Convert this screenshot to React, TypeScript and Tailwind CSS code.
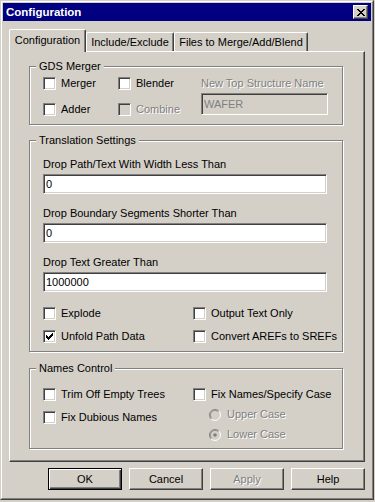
import type { ReactNode } from 'react'

const disabledText = 'text-[#808080] [text-shadow:1px_1px_0_#ffffff]'

function CheckBox({ label, checked = false, disabled = false }: { label: string; checked?: boolean; disabled?: boolean }) {
  return (
    <div className="flex h-[13px] items-center">
      <div
        className={`flex h-[13px] w-[13px] shrink-0 items-center justify-center border border-t-[#808080] border-l-[#808080] border-r-white border-b-white shadow-[inset_1px_1px_0_#404040,inset_-1px_-1px_0_#d4d0c8] ${
          disabled ? 'bg-[#d4d0c8]' : 'bg-white'
        }`}
      >
        {checked && (
          <svg width="7" height="7" viewBox="0 0 7 7" shapeRendering="crispEdges">
            <path
              fill="#000"
              d="M0 2h1v3h-1z M1 3h1v3h-1z M2 4h1v3h-1z M3 3h1v3h-1z M4 2h1v3h-1z M5 1h1v3h-1z M6 0h1v3h-1z"
            />
          </svg>
        )}
      </div>
      <span className={`ml-[5px] whitespace-nowrap leading-[13px] ${disabled ? disabledText : 'text-black'}`}>{label}</span>
    </div>
  )
}

function Radio({ label, checked = false }: { label: string; checked?: boolean }) {
  // only disabled radios in this dialog
  return (
    <div className="flex h-[13px] items-center">
      <svg width="12" height="12" viewBox="0 0 12 12" className="shrink-0">
        <circle cx="6" cy="6" r="5.5" fill="#d4d0c8" />
        <path d="M2.111 9.889A5.5 5.5 0 0 1 9.889 2.111" fill="none" stroke="#808080" />
        <path d="M9.889 2.111A5.5 5.5 0 0 1 2.111 9.889" fill="none" stroke="#ffffff" />
        <path d="M2.818 9.182A4.5 4.5 0 0 1 9.182 2.818" fill="none" stroke="#404040" strokeOpacity="0.35" />
        {checked && <circle cx="6" cy="6" r="1.8" fill="#808080" />}
      </svg>
      <span className={`ml-[6px] whitespace-nowrap leading-[13px] ${disabledText}`}>{label}</span>
    </div>
  )
}

function Field({ value, disabled = false, className = '' }: { value: string; disabled?: boolean; className?: string }) {
  return (
    <input
      readOnly
      defaultValue={value}
      className={`border border-t-[#808080] border-l-[#808080] border-r-white border-b-white pl-[2px] leading-[13px] shadow-[inset_1px_1px_0_#404040,inset_-1px_-1px_0_#d4d0c8] outline-none ${
        disabled ? 'bg-[#d4d0c8] text-[#808080]' : 'bg-white text-black'
      } ${className}`}
    />
  )
}

function GroupBox({ title, className = '', children }: { title: string; className?: string; children: ReactNode }) {
  return (
    <fieldset className={`w-[314px] border border-[#808080] shadow-[inset_1px_1px_0_#ffffff,1px_1px_0_#ffffff] ${className}`}>
      <legend className="ml-[6px] bg-[#d4d0c8] px-[3px] leading-[13px]">{title}</legend>
      {children}
    </fieldset>
  )
}

function Button({ label, isDefault = false, disabled = false }: { label: string; isDefault?: boolean; disabled?: boolean }) {
  const bevel = isDefault
    ? 'border border-black shadow-[inset_1px_1px_0_#ffffff,inset_-1px_-1px_0_#404040,inset_-2px_-2px_0_#808080]'
    : 'border border-t-white border-l-white border-r-[#404040] border-b-[#404040] shadow-[inset_-1px_-1px_0_#808080]'
  return (
    <button className={`flex h-[22px] w-[74px] items-center justify-center bg-[#d4d0c8] ${bevel} ${disabled ? disabledText : 'text-black'}`}>
      {label}
    </button>
  )
}

export default function App() {
  return (
    <div className="h-[502px] w-[375px] bg-[#d4d0c8] font-['Liberation_Sans',Arial,sans-serif] text-[11px] leading-[13px] text-black">
      {/* window frame */}
      <div className="h-[500px] w-[374px] border border-t-[#d4d0c8] border-l-[#d4d0c8] border-r-[#404040] border-b-[#404040]">
        <div className="h-full border border-t-white border-l-white border-r-[#808080] border-b-[#808080] p-[1px]">
          {/* title bar */}
          <div className="flex h-[18px] items-center justify-between bg-[#000080] pl-[3px]">
            <span className="pt-[1px] text-[11.5px] font-bold text-white">Configuration</span>
            <div className="mr-[3px] flex h-[14px] w-[15px] items-center justify-center border border-t-white border-l-white border-r-[#404040] border-b-[#404040] bg-[#d4d0c8] shadow-[inset_-1px_-1px_0_#808080]">
              <svg width="8" height="7" viewBox="0 0 8 7" shapeRendering="crispEdges">
                <path
                  fill="#000"
                  d="M0 0h2v1h-2z M6 0h2v1h-2z M1 1h2v1h-2z M5 1h2v1h-2z M2 2h4v1h-4z M3 3h2v1h-2z M2 4h4v1h-4z M1 5h2v1h-2z M5 5h2v1h-2z M0 6h2v1h-2z M6 6h2v1h-2z"
                />
              </svg>
            </div>
          </div>

          <div className="px-[6px] pt-[8px]">
            {/* tabs */}
            <div className="flex h-[22px] items-end">
              <div className="relative z-10 -mb-px flex h-[23px] w-[77px] items-center justify-center rounded-t-[2px] border-t border-l border-r border-t-white border-l-white border-r-[#404040] bg-[#d4d0c8] pb-[2px] shadow-[inset_-1px_0_0_#808080]">
                Configuration
              </div>
              <div className="flex h-[19px] w-[88px] items-center justify-center rounded-t-[2px] border-t border-l border-r border-t-white border-l-white border-r-[#404040] shadow-[inset_-1px_0_0_#808080]">
                Include/Exclude
              </div>
              <div className="flex h-[19px] w-[134px] items-center justify-center rounded-t-[2px] border-t border-l border-r border-t-white border-l-white border-r-[#404040] shadow-[inset_-1px_0_0_#808080]">
                Files to Merge/Add/Blend
              </div>
            </div>

            {/* tab page */}
            <div className="h-[411px] border border-t-white border-l-white border-r-[#404040] border-b-[#404040] pl-[19px] pt-[8px] shadow-[inset_-1px_-1px_0_#808080]">
              <GroupBox title="GDS Merger">
                <div className="flex pb-[8px] pl-[13px] pt-[4px]">
                  <div className="flex w-[75px] flex-col gap-[13px]">
                    <CheckBox label="Merger" />
                    <CheckBox label="Adder" />
                  </div>
                  <div className="flex w-[83px] flex-col gap-[13px]">
                    <CheckBox label="Blender" />
                    <CheckBox label="Combine" disabled />
                  </div>
                  <div className="flex flex-col">
                    <span className={`whitespace-nowrap leading-[13px] ${disabledText}`}>New Top Structure Name</span>
                    <Field value="WAFER" disabled className="mt-[3px] h-[22px] w-[127px]" />
                  </div>
                </div>
              </GroupBox>

              <GroupBox title="Translation Settings" className="mt-[9px]">
                <div className="flex flex-col pb-[8px] pl-[13px] pt-[11px]">
                  <span>Drop Path/Text With Width Less Than</span>
                  <Field value="0" className="mt-[3px] h-[20px] w-[284px]" />
                  <span className="mt-[13px]">Drop Boundary Segments Shorter Than</span>
                  <Field value="0" className="mt-[3px] h-[20px] w-[284px]" />
                  <span className="mt-[13px]">Drop Text Greater Than</span>
                  <Field value="1000000" className="mt-[3px] h-[20px] w-[284px]" />
                  <div className="mt-[15px] grid grid-cols-[150px_1fr] gap-y-[10px]">
                    <CheckBox label="Explode" />
                    <CheckBox label="Output Text Only" />
                    <CheckBox label="Unfold Path Data" checked />
                    <CheckBox label="Convert AREFs to SREFs" />
                  </div>
                </div>
              </GroupBox>

              <GroupBox title="Names Control" className="mt-[10px]">
                <div className="flex pb-[7px] pl-[13px] pt-[13px]">
                  <div className="flex w-[150px] flex-col gap-[10px]">
                    <CheckBox label="Trim Off Empty Trees" />
                    <CheckBox label="Fix Dubious Names" />
                  </div>
                  <div className="flex flex-col">
                    <CheckBox label="Fix Names/Specify Case" />
                    <div className="mt-[7px] pl-[16px]">
                      <Radio label="Upper Case" />
                    </div>
                    <div className="mt-[7px] pl-[16px]">
                      <Radio label="Lower Case" checked />
                    </div>
                  </div>
                </div>
              </GroupBox>
            </div>

            {/* dialog buttons */}
            <div className="mt-[6px] flex justify-end gap-[7px]">
              <Button label="OK" isDefault />
              <Button label="Cancel" />
              <Button label="Apply" disabled />
              <Button label="Help" />
            </div>
          </div>
        </div>
      </div>
    </div>
  )
}
